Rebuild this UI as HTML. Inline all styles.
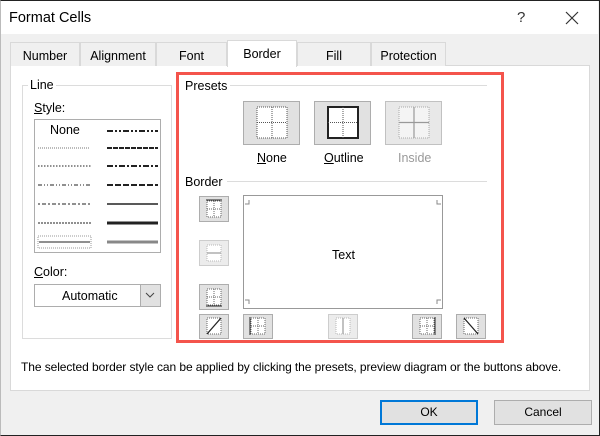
<!DOCTYPE html>
<html><head><style>
*{margin:0;padding:0;box-sizing:border-box}
body{width:600px;height:436px;overflow:hidden;font-family:"Liberation Sans",sans-serif;font-size:12px;color:#000;background:#f0f0f0;position:relative}
.a{position:absolute}
.win{left:0;top:0;width:600px;height:436px;border:1px solid #222;border-left-color:#bbb}
.title{left:1px;top:1px;width:597px;height:33px;background:#fff}
.tab{top:42px;height:24px;border:1px solid #d9d9d9;border-bottom:none;background:#f0f0f0;text-align:center;line-height:26px;font-size:12.5px}
.panel{left:10px;top:65px;width:580px;height:326px;background:#fff;border:1px solid #d9d9d9}
.btn{background:#e1e1e1;border:1px solid #adadad}
.lab{font-size:12.5px}
.hl{height:1px;background:#dcdcdc}
</style></head><body>
<div class="a win"></div>
<div class="a title"></div>
<div class="a" style="left:9px;top:10px;font-size:14.5px">Format Cells</div>
<div class="a" style="left:517px;top:9px;font-size:15px;color:#333">?</div>
<svg class="a" style="left:565px;top:11px" width="14" height="14"><path d="M1 1L13 13M13 1L1 13" stroke="#333" stroke-width="1.2"/></svg>

<div class="a panel"></div>
<div class="a tab" style="left:10px;width:70px">Number</div>
<div class="a tab" style="left:80px;width:76px">Alignment</div>
<div class="a tab" style="left:156px;width:71px">Font</div>
<div class="a tab" style="left:227px;top:40px;height:27px;width:70px;background:#fff;line-height:27px">Border</div>
<div class="a tab" style="left:297px;width:74px">Fill</div>
<div class="a tab" style="left:371px;width:75px">Protection</div>

<div class="a" style="left:22px;top:85px;width:150px;height:254px;border:1px solid #dcdcdc"></div>
<div class="a lab" style="left:28px;top:78px;background:#fff;padding:0 2px">Line</div>
<div class="a lab" style="left:34px;top:101px"><u>S</u>tyle:</div>
<div class="a" style="left:34px;top:119px;width:127px;height:134px;border:1px solid #adadad;background:#fff"></div>
<div class="a lab" style="left:50px;top:123px">None</div>
<svg class="a" style="left:35px;top:120px" width="125" height="132">
<g fill="none" stroke="#222">
<path d="M3 28H55" stroke-dasharray="1 1" stroke="#777"/>
<path d="M3 46H56" stroke-dasharray="1.5 1.5"/>
<path d="M3 65H57" stroke-dasharray="4 2 1 2 1 2"/>
<path d="M3 84H57" stroke-dasharray="2 2 4 2"/>
<path d="M3 103H57" stroke-dasharray="2 1"/>
<rect x="3" y="116" width="53" height="12" stroke="#999" stroke-dasharray="1 1"/>
<path d="M4 122H55"/>
<path d="M72 11H123" stroke-width="2" stroke-dasharray="6 2 2 2 2 2"/>
<path d="M72 28H123" stroke-width="2" stroke-dasharray="5 1"/>
<path d="M72 46H123" stroke-width="2" stroke-dasharray="6 2 2 2"/>
<path d="M72 65H123" stroke-width="2" stroke-dasharray="6 2"/>
<path d="M72 84H123" stroke-width="1.5"/>
<path d="M72 103H123" stroke-width="3"/>
<path d="M72 122H123" stroke-width="3" stroke="#888"/>
</g></svg>
<div class="a lab" style="left:34px;top:265px"><u>C</u>olor:</div>
<div class="a" style="left:34px;top:284px;width:127px;height:23px;border:1px solid #adadad;background:#fff"></div>
<div class="a lab" style="left:62px;top:289px">Automatic</div>
<div class="a" style="left:140px;top:285px;width:20px;height:21px;background:#e1e1e1;border-left:1px solid #adadad"></div>
<svg class="a" style="left:145px;top:292px" width="10" height="6"><path d="M1 1L5 5L9 1" fill="none" stroke="#444"/></svg>

<div class="a" style="left:176px;top:72px;width:328px;height:271px;border:3px solid #f4544c"></div>
<div class="a lab" style="left:185px;top:79px">Presets</div>
<div class="a hl" style="left:230px;top:85px;width:257px"></div>
<div class="a lab" style="left:185px;top:175px">Border</div>
<div class="a hl" style="left:227px;top:181px;width:260px"></div>

<div class="a btn" style="left:243px;top:101px;width:57px;height:44px"></div>
<div class="a btn" style="left:314px;top:101px;width:57px;height:44px"></div>
<div class="a btn" style="left:385px;top:101px;width:57px;height:44px;opacity:.75"></div>
<svg class="a" style="left:243px;top:101px" width="200" height="44"><g fill="none">
<rect x="14" y="6" width="30" height="31" fill="#fff" stroke="#555" stroke-dasharray="1 1"/>
<path d="M29 6V37M14 21.5H44" stroke="#555" stroke-dasharray="1 1"/>
<rect x="85" y="6" width="30" height="31" fill="#fff" stroke="#222" stroke-width="2"/>
<path d="M100 6V37M85 21.5H115" stroke="#555" stroke-dasharray="1 1"/>
<rect x="156" y="6" width="30" height="31" fill="#f4f4f4" stroke="#aaa" stroke-dasharray="1 1"/>
<path d="M171 6V37M156 21.5H186" stroke="#999" stroke-width="1.2"/>
</g></svg>
<div class="a lab" style="left:257px;top:151px"><u>N</u>one</div>
<div class="a lab" style="left:324px;top:151px"><u>O</u>utline</div>
<div class="a lab" style="left:398px;top:151px;color:#999">Inside</div>

<div class="a" style="left:243px;top:195px;width:200px;height:114px;border:1px solid #999;background:#fff"></div>
<svg class="a" style="left:243px;top:195px" width="200" height="114"><g stroke="#888" fill="none">
<path d="M6 5V9H2M194 5V9H198M6 109V105H2M194 109V105H198"/></g></svg>
<div class="a lab" style="left:332px;top:248px">Text</div>

<svg class="a" style="left:199px;top:196px" width="290" height="143"><g fill="none">
<g transform="translate(0,0)"><rect x=".5" y=".5" width="29" height="25" fill="#e1e1e1" stroke="#adadad"/><rect x="8" y="5" width="14" height="16" fill="#fff" stroke="#666" stroke-dasharray="1 1"/><path d="M15 5V21M8 13H22" stroke="#666" stroke-dasharray="1 1"/><path d="M7 4H23" stroke="#222"/></g>
<g transform="translate(0,44)" opacity=".6"><rect x=".5" y=".5" width="29" height="25" fill="#e1e1e1" stroke="#adadad"/><rect x="8" y="5" width="14" height="16" fill="#fff" stroke="#888" stroke-dasharray="1 1"/><path d="M8 13H22" stroke="#666" stroke-width="1.3"/></g>
<g transform="translate(0,88)"><rect x=".5" y=".5" width="29" height="25" fill="#e1e1e1" stroke="#adadad"/><rect x="8" y="5" width="14" height="16" fill="#fff" stroke="#666" stroke-dasharray="1 1"/><path d="M15 5V21M8 13H22" stroke="#666" stroke-dasharray="1 1"/><path d="M7 22H23" stroke="#222"/></g>
<g transform="translate(0,118)"><rect x=".5" y=".5" width="29" height="24" fill="#e1e1e1" stroke="#adadad"/><rect x="8" y="4" width="14" height="16" fill="#fff" stroke="#666" stroke-dasharray="1 1"/><path d="M8 20L22 4" stroke="#222" stroke-width="1.3"/></g>
<g transform="translate(44,118)"><rect x=".5" y=".5" width="29" height="24" fill="#e1e1e1" stroke="#adadad"/><rect x="8" y="4" width="14" height="16" fill="#fff" stroke="#666" stroke-dasharray="1 1"/><path d="M15 4V20M8 12H22" stroke="#666" stroke-dasharray="1 1"/><path d="M7 3V21" stroke="#222"/></g>
<g transform="translate(129,118)" opacity=".6"><rect x=".5" y=".5" width="29" height="24" fill="#e1e1e1" stroke="#adadad"/><rect x="8" y="4" width="14" height="16" fill="#fff" stroke="#888" stroke-dasharray="1 1"/><path d="M15 4V20" stroke="#666" stroke-width="1.3"/></g>
<g transform="translate(213,118)"><rect x=".5" y=".5" width="29" height="24" fill="#e1e1e1" stroke="#adadad"/><rect x="8" y="4" width="14" height="16" fill="#fff" stroke="#666" stroke-dasharray="1 1"/><path d="M15 4V20M8 12H22" stroke="#666" stroke-dasharray="1 1"/><path d="M23 3V21" stroke="#222"/></g>
<g transform="translate(257,118)"><rect x=".5" y=".5" width="29" height="24" fill="#e1e1e1" stroke="#adadad"/><rect x="8" y="4" width="14" height="16" fill="#fff" stroke="#666" stroke-dasharray="1 1"/><path d="M8 4L22 20" stroke="#222" stroke-width="1.3"/></g>
</g></svg>

<div class="a" style="left:21px;top:360px;font-size:12px;letter-spacing:-0.08px">The selected border style can be applied by clicking the presets, preview diagram or the buttons above.</div>

<div class="a btn" style="left:380px;top:400px;width:98px;height:25px;border:2px solid #0078d7;text-align:center;line-height:21px">OK</div>
<div class="a btn" style="left:494px;top:400px;width:98px;height:25px;text-align:center;line-height:23px">Cancel</div>
</body></html>
